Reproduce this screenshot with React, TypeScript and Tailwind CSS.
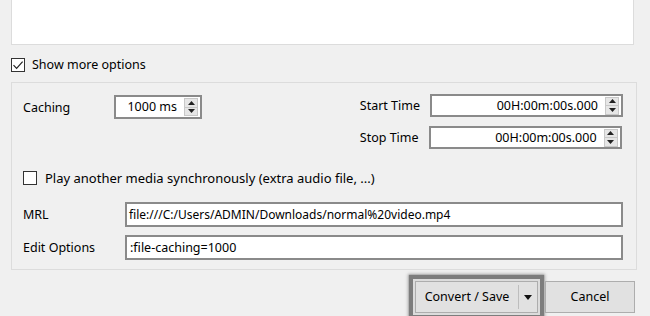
import React from 'react';

const font = { fontFamily: '"Noto Sans", "Open Sans", sans-serif' };

// tiny up/down arrows used by the spin boxes
const SpinButtons = () => (
  <div className="flex flex-col w-[14px] h-[18px] border border-[#c8c8c8] bg-[#e6e6e6]">
    <div className="flex-1 flex items-center justify-center border-b border-[#c8c8c8]">
      <svg width="7" height="4" viewBox="0 0 7 4"><path d="M3.5 0 L7 4 L0 4 Z" fill="#222" /></svg>
    </div>
    <div className="flex-1 flex items-center justify-center">
      <svg width="7" height="4" viewBox="0 0 7 4"><path d="M0 0 L7 0 L3.5 4 Z" fill="#222" /></svg>
    </div>
  </div>
);

const SpinBox = ({ value, className }: { value: string; className: string }) => (
  <div className={`flex items-center bg-white border-2 border-[#8a8a8a] pl-2 pr-[2px] ${className}`}>
    <span className="flex-1 text-right pr-[7px] text-black pt-px">{value}</span>
    <SpinButtons />
  </div>
);

const CheckBox = ({ checked }: { checked?: boolean }) => (
  <div className="w-[14px] h-[14px] border border-[#333] bg-white flex items-center justify-center">
    {checked && (
      <svg width="12" height="12" viewBox="0 0 12 12">
        <path d="M1.5 6.2 L4.6 9.3 L10.6 2.6" stroke="#222" strokeWidth="1.2" fill="none" />
      </svg>
    )}
  </div>
);

const App = () => {
  return (
    <div className="w-[650px] h-[316px] bg-[#f0f0f0] overflow-hidden text-[12.5px] text-black" style={font}>
      {/* list area (cut off at the top) */}
      <div className="ml-[11px] w-[623px] h-[45px] bg-white border border-t-0 border-[#dcdcdc]" />

      <div className="flex items-center gap-[7px] ml-[11px] mt-[13px] h-[14px]">
        <CheckBox checked />
        <span className="pt-px">Show more options</span>
      </div>

      {/* options group */}
      <div className="ml-[11px] mt-[10px] w-[626px] h-[188px] border border-[#dcdcdc] pt-[11px] pl-[11px]">
        <div className="flex">
          <div className="flex items-center h-[24px] mt-[1px]">
            <span className="w-[91px] pt-[2px]">Caching</span>
            <SpinBox value="1000 ms" className="w-[88px] h-[24px]" />
          </div>
          <div className="ml-auto mr-[13px] flex flex-col gap-[9px]">
            <div className="flex items-center h-[23px]">
              <span className="mr-[10px] pt-[2px]">Start Time</span>
              <SpinBox value="00H:00m:00s.000" className="w-[193px] h-[23px]" />
            </div>
            <div className="flex items-center h-[23px]">
              <span className="mr-[10px] pt-[2px]">Stop Time</span>
              <SpinBox value="00H:00m:00s.000" className="w-[193px] h-[23px]" />
            </div>
          </div>
        </div>

        <div className="flex items-center gap-[8px] mt-[22px] h-[14px]">
          <CheckBox />
          <span className="pt-px text-[13px]">Play another media synchronously (extra audio file, ...)</span>
        </div>

        <div className="flex items-center mt-[17px] h-[25px]">
          <span className="w-[102px] pt-px">MRL</span>
          <div className="w-[498px] h-[25px] bg-white border-2 border-[#8a8a8a] flex items-center px-[2px] pt-px text-[12px]">
            file:///C:/Users/ADMIN/Downloads/normal%20video.mp4
          </div>
        </div>
        <div className="flex items-center mt-[8px] h-[25px]">
          <span className="w-[102px] pt-px">Edit Options</span>
          <div className="w-[498px] h-[25px] bg-white border-2 border-[#8a8a8a] flex items-center px-[3px] pt-px">
            :file-caching=1000
          </div>
        </div>
      </div>

      {/* dialog buttons */}
      <div className="flex justify-end gap-[7px] mt-[11px] mr-[15px]">
        <div className="flex items-stretch w-[123px] h-[32px] bg-[#e1e1e1] border border-[#adadad] shadow-[0_0_0_2px_#dcdcdc,0_0_1px_6px_#7d7d7d,0_0_3px_7px_#a8a8a8]">
          <span className="flex-1 flex items-center justify-center pt-px">Convert / Save</span>
          <div className="w-px my-[3px] bg-[#bdbdbd]" />
          <div className="w-[18px] flex items-center justify-center">
            <svg width="8" height="5" viewBox="0 0 8 5"><path d="M0 0 L8 0 L4 5 Z" fill="#111" /></svg>
          </div>
        </div>
        <div className="w-[90px] h-[32px] bg-[#e1e1e1] border border-[#adadad] flex items-center justify-center pt-px">
          Cancel
        </div>
      </div>
    </div>
  );
};

export default App;
